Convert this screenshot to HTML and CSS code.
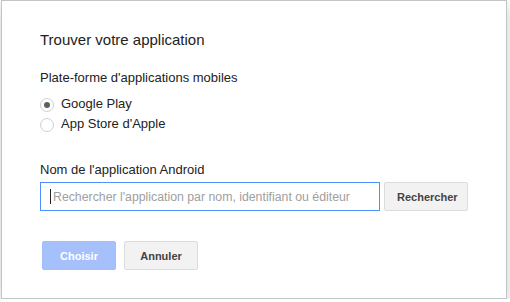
FILE: index.html
```html
<!DOCTYPE html>
<html lang="fr">
  <head>
    <meta charset="utf-8" />
    <meta name="viewport" content="width=device-width, initial-scale=1" />
    <title>Trouver votre application</title>
    <link rel="stylesheet" href="styles.css">
  </head>
  <body>
    <div class="dialog">
      <div class="title">Trouver votre application</div>

      <div class="label platform-label">Plate-forme d'applications mobiles</div>
      <label class="radio-row">
        <span class="radio checked"></span>
        Google Play
      </label>
      <label class="radio-row">
        <span class="radio"></span>
        App Store d'Apple
      </label>

      <div class="label name-label">Nom de l'application Android</div>
      <div class="search-row">
        <div class="search-input">
          <span class="caret"></span>
          <span class="placeholder">Rechercher l'application par nom, identifiant ou éditeur</span>
        </div>
        <button class="btn">Rechercher</button>
      </div>

      <div class="actions">
        <button class="btn btn-primary" disabled>Choisir</button>
        <button class="btn">Annuler</button>
      </div>
    </div>
  </body>
</html>
```

FILE: styles.css
```css
html {
  background: #fff;
}
body {
  margin: 0;
  font-family: "Liberation Sans", Arial, sans-serif;
  color: #222;
}

.dialog {
  box-sizing: border-box;
  width: 506px;
  height: 299px;
  margin-left: 1px;
  padding: 29px 0 0 38px;
  background: #fff;
  border: 1px solid #c4c4c4;
  box-shadow: 0 4px 16px rgba(0, 0, 0, 0.2);
}

.title {
  font-size: 15px;
  line-height: 20px;
}

.label {
  font-size: 13px;
  line-height: 16px;
}
.platform-label {
  margin-top: 20px;
  margin-bottom: 8px;
}
.name-label {
  margin-top: 28px;
  margin-bottom: 4px;
}

/* radios */
.radio-row {
  display: flex;
  align-items: center;
  gap: 7px;
  font-size: 13px;
  line-height: 20px;
  height: 20px;
}
.radio {
  box-sizing: border-box;
  width: 14px;
  height: 14px;
  border: 1px solid #cfcfcf;
  border-radius: 50%;
  background: #fff;
  position: relative;
  top: 1px;
}
.radio.checked::after {
  content: "";
  position: absolute;
  left: 3px;
  top: 3px;
  width: 6px;
  height: 6px;
  border-radius: 50%;
  background: #606060;
}

/* search */
.search-row {
  display: flex;
  gap: 4px;
}
.search-input {
  box-sizing: border-box;
  width: 340px;
  height: 29px;
  border: 1px solid #4d90fe;
  display: flex;
  align-items: center;
  padding-left: 9px;
  font-size: 12px;
  overflow: hidden;
  white-space: nowrap;
}
.caret {
  width: 1px;
  height: 15px;
  background: #222;
  margin-right: 2px;
}
.placeholder {
  color: #a0a0a0;
  font-size: 12.3px;
}

.btn {
  box-sizing: border-box;
  height: 29px;
  padding: 0 12px;
  font-family: "Liberation Sans", Arial, sans-serif;
  font-size: 11px;
  font-weight: bold;
  color: #444;
  background: #f2f2f2;
  border: 1px solid #dcdcdc;
  border-radius: 2px;
}
.search-row .btn {
  width: 84px;
}

.actions {
  display: flex;
  gap: 8px;
  margin-top: 30px;
  padding-left: 2px;
}
.actions .btn {
  width: 74px;
}
.btn-primary {
  color: #fff;
  background: #a6c0fb;
  border-color: #a3bdf8;
}
```
